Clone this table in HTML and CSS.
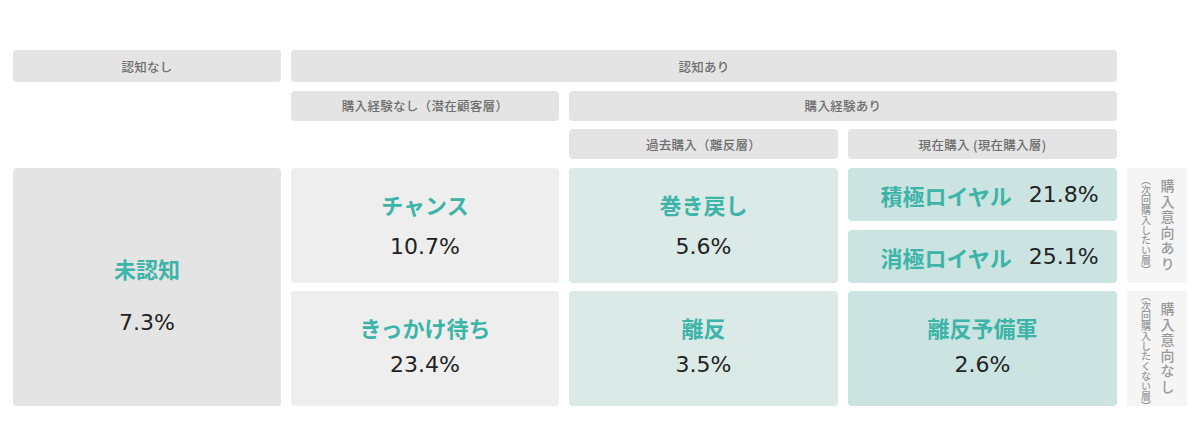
FILE: index.html
```html
<!DOCTYPE html>
<html lang="ja">
<head>
<meta charset="utf-8">
<title>顧客セグメント</title>
<link rel="stylesheet" href="styles.css">
</head>
<body>
<div class="matrix">
  <div class="hd c1 r1">認知なし</div>
  <div class="hd c2-4 r1">認知あり</div>
  <div class="hd c2 r2">購入経験なし（潜在顧客層）</div>
  <div class="hd c3-4 r2">購入経験あり</div>
  <div class="hd c3 r3">過去購入（離反層）</div>
  <div class="hd c4 r3">現在購入 (現在購入層)</div>

  <div class="cell grey c1 r4-5 big">
    <div class="title">未認知</div>
    <div class="pct">7.3%</div>
  </div>
  <div class="cell light c2 r4 upper">
    <div class="title">チャンス</div>
    <div class="pct">10.7%</div>
  </div>
  <div class="cell light c2 r5 lower">
    <div class="title">きっかけ待ち</div>
    <div class="pct">23.4%</div>
  </div>
  <div class="cell mint c3 r4 upper">
    <div class="title">巻き戻し</div>
    <div class="pct">5.6%</div>
  </div>
  <div class="cell mint c3 r5 lower">
    <div class="title">離反</div>
    <div class="pct">3.5%</div>
  </div>
  <div class="stack c4 r4">
    <div class="cell teal inline">
      <div class="title">積極ロイヤル</div>
      <div class="pct">21.8%</div>
    </div>
    <div class="cell teal inline">
      <div class="title">消極ロイヤル</div>
      <div class="pct">25.1%</div>
    </div>
  </div>
  <div class="cell teal c4 r5 lower">
    <div class="title">離反予備軍</div>
    <div class="pct">2.6%</div>
  </div>

  <div class="side c5 r4">
    <span class="sub">（次回購入したい層）</span>
    <span class="main">購入意向あり</span>
  </div>
  <div class="side c5 r5">
    <span class="sub">（次回購入したくない層）</span>
    <span class="main">購入意向なし</span>
  </div>
</div>
</body>
</html>
```

FILE: styles.css
```css
html, body {
  margin: 0;
  padding: 0;
  background: #ffffff;
}

body {
  font-family: "Noto Sans CJK JP", "Noto Sans", sans-serif;
}

.matrix {
  display: grid;
  grid-template-columns: 268px 268px 269px 269px 60px;
  grid-template-rows: 32px 30px 30px 115px 115px;
  column-gap: 10px;
  row-gap: 8.5px;
  padding: 50px 0 0 13px;
}

.c1 { grid-column: 1; }
.c2 { grid-column: 2; }
.c3 { grid-column: 3; }
.c4 { grid-column: 4; }
.c5 { grid-column: 5; }
.c2-4 { grid-column: 2 / 5; }
.c3-4 { grid-column: 3 / 5; }
.r1 { grid-row: 1; }
.r2 { grid-row: 2; }
.r3 { grid-row: 3; }
.r4 { grid-row: 4; }
.r5 { grid-row: 5; }
.r4-5 { grid-row: 4 / 6; }

.hd {
  background: #e4e4e4;
  border-radius: 4px;
  display: flex;
  align-items: center;
  justify-content: center;
  font-size: 12.5px;
  font-weight: 500;
  color: #6e6e6e;
  letter-spacing: 0.3px;
}

.cell {
  border-radius: 4px;
  display: flex;
  flex-direction: column;
  align-items: center;
  padding-top: 22px;
  box-sizing: border-box;
}

.grey { background: #e4e4e4; }
.light { background: #eeeeee; }
.mint { background: #dbe9e7; }
.teal { background: #cbe4e2; }

.title {
  font-size: 22px;
  line-height: 28px;
  font-weight: 700;
  color: #3db4a8;
}

.pct {
  font-family: "DejaVu Sans", "Noto Sans", sans-serif;
  font-size: 22px;
  line-height: 28px;
  color: #222222;
}

.upper { gap: 15px; }
.lower { gap: 10px; }
.big { padding-top: 86px; gap: 27px; }

.stack {
  display: flex;
  flex-direction: column;
  gap: 9px;
}

.stack .cell {
  flex: 1;
}

.inline {
  flex-direction: row;
  justify-content: center;
  align-items: center;
  padding: 2px 0 0 14px;
  gap: 17px;
}

.side {
  background: #f5f5f5;
  display: flex;
  flex-direction: row;
  justify-content: center;
  align-items: center;
  gap: 8px;
  padding-left: 1px;
}

.side span {
  writing-mode: vertical-rl;
  color: #9a9a9a;
}

.side .main {
  font-size: 14px;
  line-height: 15px;
  font-weight: 500;
  letter-spacing: 1.5px;
}

.side .sub {
  font-size: 10px;
  line-height: 11px;
  font-weight: 500;
}
```
